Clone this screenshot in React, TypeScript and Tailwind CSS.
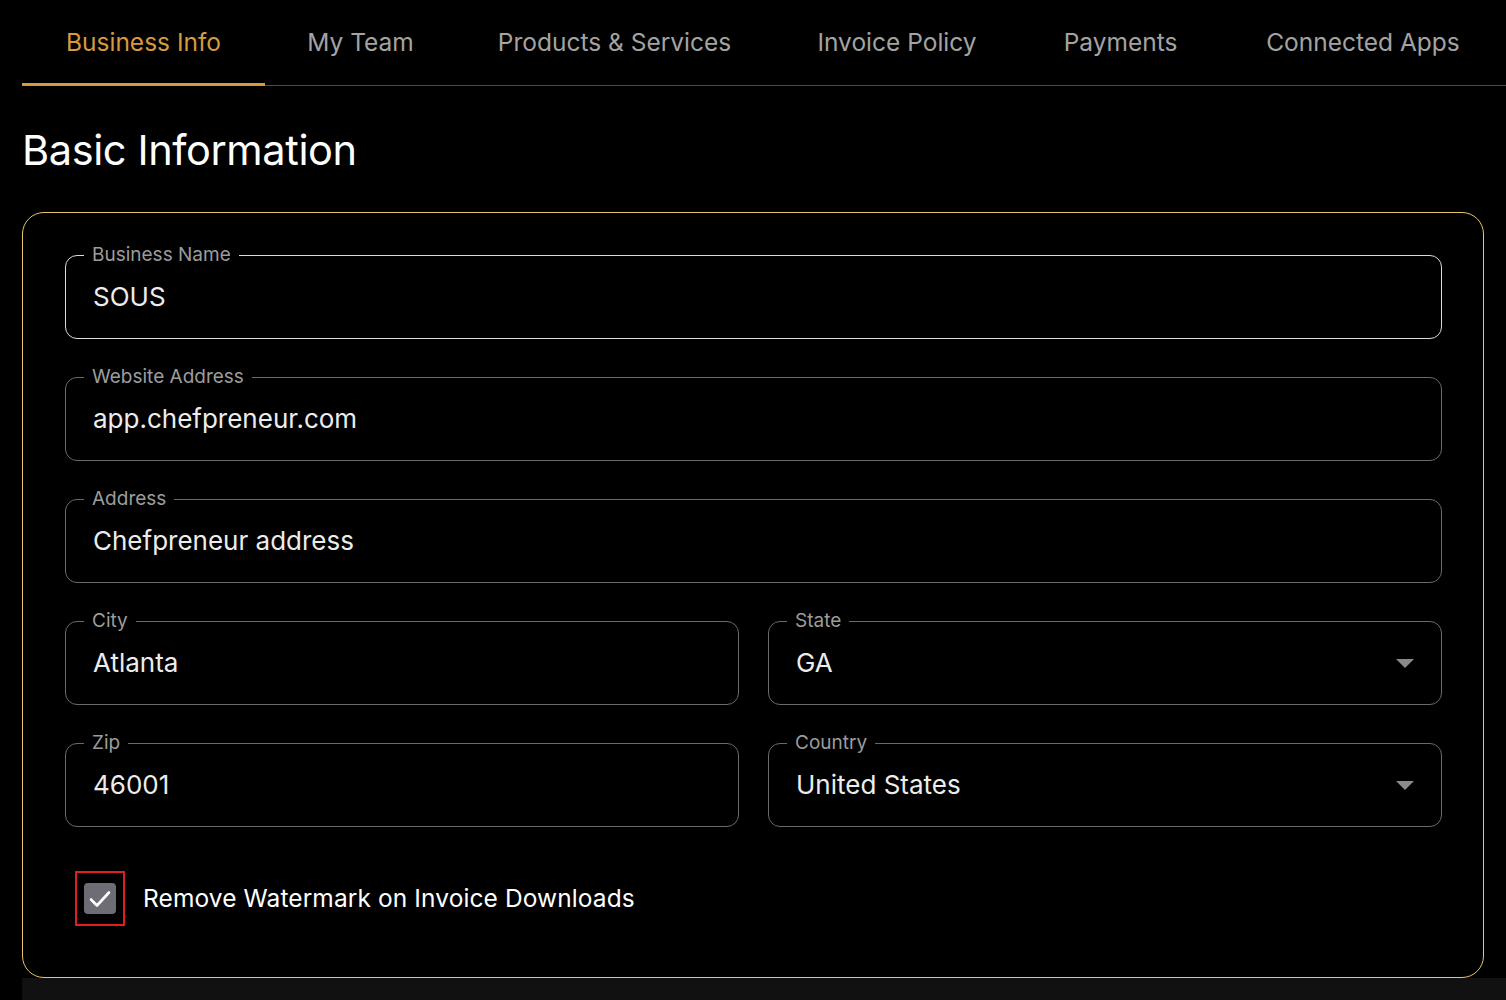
import React from "react";

const tabs = [
  { label: "Business Info", w: "w-[243px]", active: true },
  { label: "My Team", w: "w-[191px]" },
  { label: "Products & Services", w: "w-[317px]" },
  { label: "Invoice Policy", w: "w-[248px]" },
  { label: "Payments", w: "w-[199px]" },
  { label: "Connected Apps", w: "w-[286px]" },
];

function Field({
  label,
  value,
  select,
  focused,
}: {
  label: string;
  value: string;
  select?: boolean;
  focused?: boolean;
}) {
  return (
    <div
      className={`relative flex h-[84px] items-center rounded-[12px] border pl-[27px] pr-[26px] ${
        focused ? "border-[#dcdcdc]" : "border-[#6a6a6a]"
      }`}
    >
      <span className="absolute left-[18px] top-[-13px] bg-black px-[8px] text-[19px] leading-[24px] text-[#9c9c9c]">
        {label}
      </span>
      <span className="flex-1 text-[26px] leading-[32px] text-[#ececec]">{value}</span>
      {select && (
        <svg width="20" height="10" viewBox="0 0 20 10" className="mt-[1px]">
          <path d="M1 0 L19 0 L10 9 Z" fill="#8a8a8a" />
        </svg>
      )}
    </div>
  );
}

export default function App() {
  return (
    <div
      className="min-h-[1000px] w-full overflow-hidden bg-black pl-[22px] text-white"
      style={{ fontFamily: "Inter, 'Noto Sans', sans-serif" }}
    >
      <div className="flex h-[86px] border-b border-[#4a4a4a]">
        {tabs.map((t) => (
          <div
            key={t.label}
            className={`relative flex shrink-0 items-center justify-center text-[24.5px] ${t.w} ${
              t.active ? "text-[#d69a3f]" : "text-[#a3a3a3]"
            }`}
          >
            {t.label}
            {t.active && (
              <div className="absolute bottom-[-1px] left-0 right-0 h-[3px] bg-[#d69a3f]" />
            )}
          </div>
        ))}
      </div>

      <h1 className="mt-[38px] text-[41.5px] leading-[52px] tracking-[-0.4px] text-white">
        Basic Information
      </h1>

      <div className="mr-[22px] mt-[36px] rounded-[22px] border border-[#e9c66e] pb-[51px] pl-[42px] pr-[41px] pt-[42px]">
        <div className="flex flex-col gap-[38px]">
          <Field label="Business Name" value="SOUS" focused />
          <Field label="Website Address" value="app.chefpreneur.com" />
          <Field label="Address" value="Chefpreneur address" />
          <div className="grid grid-cols-2 gap-[29px]">
            <Field label="City" value="Atlanta" />
            <Field label="State" value="GA" select />
          </div>
          <div className="grid grid-cols-2 gap-[29px]">
            <Field label="Zip" value="46001" />
            <Field label="Country" value="United States" select />
          </div>
        </div>

        <div className="mt-[44px] flex items-center gap-[18px] pl-[10px]">
          <div className="flex h-[55px] w-[50px] items-center justify-center border-2 border-[#e01e1e]">
            <div className="flex h-[31px] w-[32px] items-center justify-center rounded-[4px] bg-[#6e6d75]">
              <svg width="24" height="20" viewBox="0 0 24 20">
                <path
                  d="M3 10.5 L9 16.5 L21 3.5"
                  fill="none"
                  stroke="white"
                  strokeWidth="2.6"
                  strokeLinecap="round"
                  strokeLinejoin="round"
                />
              </svg>
            </div>
          </div>
          <span className="text-[24.5px] tracking-[0.1px] text-white">
            Remove Watermark on Invoice Downloads
          </span>
        </div>
      </div>

      <div className="h-[40px] bg-[#111111]" />
    </div>
  );
}
